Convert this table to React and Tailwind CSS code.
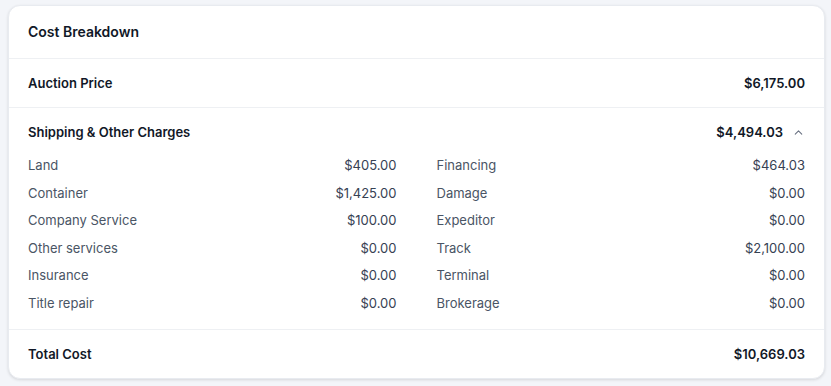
import React from 'react';
import { ChevronUp } from 'lucide-react';

const left = [
  ['Land', '$405.00'],
  ['Container', '$1,425.00'],
  ['Company Service', '$100.00'],
  ['Other services', '$0.00'],
  ['Insurance', '$0.00'],
  ['Title repair', '$0.00'],
];

const right = [
  ['Financing', '$464.03'],
  ['Damage', '$0.00'],
  ['Expeditor', '$0.00'],
  ['Track', '$2,100.00'],
  ['Terminal', '$0.00'],
  ['Brokerage', '$0.00'],
];

const Line = ({ label, value }) => (
  <div className="flex justify-between items-center h-5 leading-5">
    <span className="text-gray-600">{label}</span>
    <span className="text-gray-700">{value}</span>
  </div>
);

export default function App() {
  return (
    <div className="min-h-screen bg-[#f3f5f9] pl-2 pr-[6px] pt-[5px] font-['Inter',sans-serif] text-[13px]">
      <div className="bg-white rounded-xl border border-[#e8ebf0] shadow-[0_1px_3px_rgba(0,0,0,0.12)] overflow-hidden">
        <div className="pl-[19px] pr-5 py-[16px] leading-5 text-[14px] font-semibold text-[#111827] border-b border-[#eef0f3]">
          Cost Breakdown
        </div>

        <div className="pl-[19px] pr-[19px] py-[14px] leading-5 flex justify-between font-semibold text-[#111827] border-b border-[#eef0f3]">
          <span>Auction Price</span>
          <span>$6,175.00</span>
        </div>

        <div className="pl-[19px] pr-[19px] pt-[14px] pb-4 border-b border-[#eef0f3]">
          <div className="flex justify-between items-center leading-5 font-semibold text-[#111827]">
            <span>Shipping &amp; Other Charges</span>
            <span className="flex items-center gap-[9px]">
              $4,494.03
              <ChevronUp size={13} className="text-gray-500" strokeWidth={2} />
            </span>
          </div>
          <div className="grid grid-cols-2 gap-x-10 mt-[13px]">
            <div className="flex flex-col gap-y-[7.6px]">
              {left.map(([l, v]) => <Line key={l} label={l} value={v} />)}
            </div>
            <div className="flex flex-col gap-y-[7.6px]">
              {right.map(([l, v]) => <Line key={l} label={l} value={v} />)}
            </div>
          </div>
        </div>

        <div className="pl-[19px] pr-[19px] py-[14px] leading-5 flex justify-between font-semibold text-[#111827]">
          <span>Total Cost</span>
          <span>$10,669.03</span>
        </div>
      </div>
    </div>
  );
}
